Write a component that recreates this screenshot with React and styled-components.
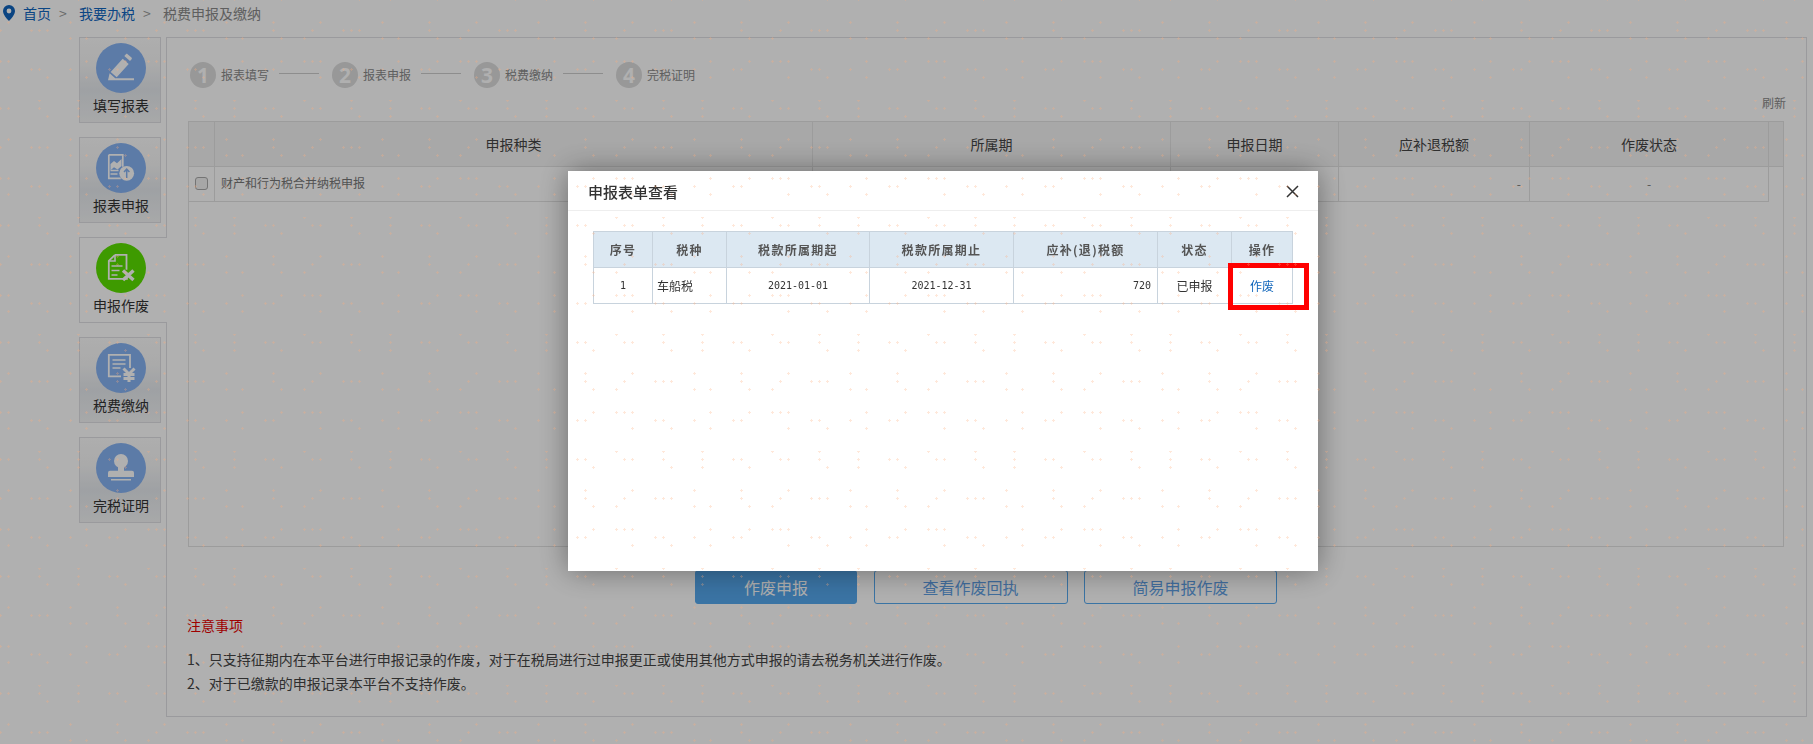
import React from 'react';
import styled, { createGlobalStyle } from 'styled-components';

const Global = createGlobalStyle`
  html, body { margin: 0; padding: 0; background: #fff; }
  body { font-family: "Noto Sans CJK SC", "Noto Sans", sans-serif; }
  * { box-sizing: border-box; }
`;

const Page = styled.div`
  width: 1813px; height: 744px; overflow: hidden; background: #fff;
`;
const Breadcrumb = styled.nav`
  display: flex; align-items: center; height: 26px; margin-bottom: 11px; padding-left: 3px;
  font-size: 14px; line-height: 26px; color: #8a8a8a;
`;
const Pin = styled.svg`
  width: 12px; height: 16px; margin-right: 8px; flex: none;
`;
const Crumb = styled.span`
  color: ${p => (p.$link ? '#1166c0' : '#8a8a8a')};
`;
const Sep = styled.span`
  width: 28px; padding-right: 4px; text-align: center; font-size: 14px; color: #999;
`;
const Layout = styled.div`
  display: flex; padding-left: 79px;
`;
const Side = styled.div`
  width: 87px; flex: none; display: flex; flex-direction: column; align-items: flex-start; gap: 14px;
`;
const Tab = styled.div`
  position: relative; z-index: 1; height: 86px; display: flex; flex-direction: column; align-items: center;
  padding: 5px ${p => (p.$active ? '6px' : '0')} 0 ${p => (p.$active ? '1px' : '2px')};
  width: ${p => (p.$active ? '88px' : '82px')};
  border: 1px solid #dfdfe4;
  border-right: ${p => (p.$active ? '0' : '1px solid #dfdfe4')};
  background: ${p => (p.$active ? '#fff' : 'linear-gradient(#fcfcfc 0%, #f7f7f7 30%, #e6eaee 62%, #f3f4f5 100%)')};
`;
const IconCircle = styled.svg`
  width: 50px; height: 50px; flex: none; display: block;
`;
const TabLabel = styled.div`
  margin-top: 2px; font-size: 14px; line-height: 20px; color: #333; white-space: nowrap;
`;
const Main = styled.main`
  width: 1641px; height: 680px; flex: none; border: 1px solid #dfdfe4;
`;
const Steps = styled.div`
  display: flex; align-items: center; height: 26px; margin-top: 24px; padding-left: 23px;
`;
const StepNum = styled.div`
  width: 26px; height: 26px; border-radius: 50%; background: #dcdcdc; color: #fff; flex: none;
  display: flex; align-items: center; justify-content: center;
  font: 700 21px/26px "Noto Sans", sans-serif;
`;
const StepText = styled.span`
  margin-left: 5px; font-size: 12px; line-height: 26px; color: #8a8a8a; white-space: nowrap;
`;
const StepLine = styled.i`
  width: 40px; height: 1px; margin: -4px 13px 0 10px; background: #ccc; flex: none;
`;
const RefreshRow = styled.div`
  height: 18px; margin-top: 6px; padding-right: 20px; text-align: right;
  font-size: 12px; line-height: 18px; color: #888;
`;
const GridBox = styled.div`
  width: 1596px; height: 426px; margin: 9px 0 0 21px; border: 1px solid #e2e2e2;
`;
const HeadRow = styled.div`
  display: grid; grid-template-columns: 26px 598px 358px 168px 191px 239px 1fr; height: 45px;
  background: #f4f4f4; border-bottom: 1px solid #e2e2e2;
`;
const HeadCell = styled.div`
  display: flex; align-items: center; justify-content: center; font-size: 14px; color: #444;
  padding-bottom: 1px;
  &:not(:last-child) { border-right: 1px solid #e2e2e2; }
`;
const DataRow = styled.div`
  display: grid; grid-template-columns: 26px 598px 358px 168px 191px 239px; height: 35px; width: 1580px;
`;
const DataCell = styled.div`
  display: flex; align-items: center; font-size: 12px; color: #777;
  justify-content: ${p => p.$align || 'flex-start'};
  padding: ${p => (p.$align === 'flex-end' ? '0 8px 2px 0' : p.$align ? '0 0 2px' : '0 0 3px 6px')};
  border-right: 1px solid #e2e2e2; border-bottom: 1px solid #e2e2e2;
`;
const Check = styled.input`
  margin: 0; width: 13px; height: 13px; accent-color: #eee; appearance: none;
  background: #f2f2f2; border: 1px solid #a8a8a8; border-radius: 3px;
`;
const Buttons = styled.div`
  display: flex; gap: 16.5px; margin-top: 23px; padding-left: 528px;
`;
const Btn = styled.button`
  width: ${p => p.$w}px; height: 34px; padding: 0 0 1px; border-radius: 3px; font: inherit; font-size: 16px;
  border: 1px solid #55a8ee;
  background: ${p => (p.$primary ? '#55a8ee' : '#fff')};
  color: ${p => (p.$primary ? '#fff' : '#5f9fe4')};
`;
const NoteTitle = styled.div`
  margin: 11px 0 0 20px; font-size: 14px; line-height: 20px; color: #e60000;
`;
const NoteList = styled.div`
  margin: 12px 0 0 20px; font-size: 14px; line-height: 24px; color: #444;
`;
const Dim = styled.div`
  position: fixed; inset: 0; z-index: 10; background: rgba(0, 0, 0, 0.31);
  padding: 171px 0 0 568px;
`;
const Modal = styled.section`
  position: relative; width: 750px; height: 400px; background: #fff;
  box-shadow: 0 0 28px rgba(0, 0, 0, 0.4);
`;
const ModalHead = styled.header`
  display: flex; align-items: center; justify-content: space-between; height: 40px;
  padding: 1px 19px 0 20px; border-bottom: 1px solid #eee;
  font-size: 15px; font-weight: 500; color: #333;
`;
const Close = styled.svg`
  width: 13px; height: 13px; display: block;
`;
const FormTable = styled.div`
  width: 700px; margin: 20px 0 0 25px; border: 1px solid #c8d3dd;
`;
const cols = '59px 74px 143px 144px 144px 74px 60px';
const FormHead = styled.div`
  display: grid; grid-template-columns: ${cols}; height: 36px; background: #dce8f2;
  border-bottom: 1px solid #c8d3dd;
`;
const FormTh = styled.div`
  display: flex; align-items: center; justify-content: center; font-size: 12px; font-weight: 700;
  letter-spacing: 1.3px; color: #555;
  &:not(:last-child) { border-right: 1px solid #c8d3dd; }
`;
const FormRow = styled.div`
  display: grid; grid-template-columns: ${cols}; height: 35px;
`;
const FormTd = styled.div`
  display: flex; align-items: center; color: ${p => (p.$link ? '#1166bb' : '#333')};
  justify-content: ${p => p.$align || 'center'};
  padding: 0 ${p => (p.$align === 'flex-end' ? '6px' : '0')} 1px ${p => (p.$align === 'flex-start' ? '4px' : '0')};
  font-family: ${p => (p.$mono ? '"DejaVu Sans Mono", "Liberation Mono", monospace' : 'inherit')};
  font-size: ${p => (p.$mono ? '10px' : '12px')};
  &:not(:last-child) { border-right: 1px solid #c8d3dd; }
`;
const Highlight = styled.div`
  position: absolute; left: 660px; top: 92px; width: 81px; height: 47px; border: 5px solid #ff0000;
`;
const Watermark = styled.svg`
  position: fixed; inset: 0; z-index: 20; width: 1813px; height: 744px; pointer-events: none;
`;

const marks = [
  [48,0],[95,0],[134,0],[9,8],[17,8],[56,8],[64,8],[95,8],[134,8],[25,16],[103,16],[134,16],
  [17,39],[64,39],[126,39],[17,47],[56,47],[87,47],[95,47],[103,47],[25,55],[48,55],[126,55],[142,55],
  [25,78],[48,78],[56,78],[64,78],[142,78],[9,86],[17,86],[87,86],[95,86],[126,86],[64,94],[103,94],[142,94],
];

const Disc = ({ color, children }) => (
  <IconCircle viewBox="0 0 50 50">
    <circle cx="25" cy="25" r="25" fill={color} />
    {children}
  </IconCircle>
);
const BLUE = '#86b2f2';
const GREEN = '#5bdf00';

const PencilIcon = () => (
  <Disc color={BLUE}>
    <path fill="#fff" d="M26.700 15.700l6 5.300L20.700 34.300l-6-5.300zM28.300 13l1.600-1.800c.5-.5 1.200-.5 1.700 0l3.900 3.400c.5.5.5 1.200.1 1.700l-1.600 1.800zM13.600 30.300l5.600 5H38v2H12z" />
  </Disc>
);
const ReportIcon = () => (
  <Disc color={BLUE}>
    <path fill="none" stroke="#fff" strokeWidth="1.700" d="M12.800 11.800h14v12M12.800 11.800v23.500h12" />
    <path fill="#fff" d="M14.500 21l3.500-3 3 2.200 4.500-4.200v7l-4 3.400-3.500-2.200-3.500 3z" />
    <path fill="none" stroke="#fff" strokeWidth="1.500" d="M14.500 27.500h8M14.500 31h7" />
    <circle cx="30.700" cy="30.300" r="7.400" fill="#fff" />
    <path fill="none" stroke={BLUE} strokeWidth="1.500" d="M30.700 35v-8.600M28 29l2.700-2.800 2.700 2.800" />
  </Disc>
);
const VoidIcon = () => (
  <Disc color={GREEN}>
    <path fill="none" stroke="#fff" strokeWidth="1.800" d="M19 11.800h11.500v15M19 11.800l-6.200 6v18h19" />
    <path fill="none" stroke="#fff" strokeWidth="1.600" d="M19 12v6h-6M15.500 23h11M15.500 27.500h8M15.500 32h6" />
    <path fill="none" stroke="#fff" strokeWidth="3.400" d="M27 27.500l10.500 9.500M37.500 27.500L27 37" />
  </Disc>
);
const PayIcon = () => (
  <Disc color={BLUE}>
    <path fill="none" stroke="#fff" strokeWidth="1.800" d="M34 25V11.800H12.800v21.500H25" />
    <path fill="none" stroke="#fff" strokeWidth="1.600" d="M16.500 17h13M16.500 21h13M16.500 25h8" />
    <path fill="none" stroke="#fff" strokeWidth="3" d="M27.500 25.500l5.500 5.500 5.500-5.500M33 31v8M27.500 31.500h11M27.500 35.500h11" />
  </Disc>
);
const StampIcon = () => (
  <Disc color={BLUE}>
    <circle cx="25" cy="18" r="7" fill="#fff" />
    <path fill="#fff" d="M22 22h6v6h-6zM14 27.700h22a2 2 0 0 1 2 2V34H12v-4.300a2 2 0 0 1 2-2zM15 36h20v1.600H15z" />
  </Disc>
);

const tabs = [
  { label: '填写报表', Icon: PencilIcon },
  { label: '报表申报', Icon: ReportIcon },
  { label: '申报作废', Icon: VoidIcon, active: true },
  { label: '税费缴纳', Icon: PayIcon },
  { label: '完税证明', Icon: StampIcon },
];
const steps = ['报表填写', '报表申报', '税费缴纳', '完税证明'];

export default function App() {
  return (
    <Page>
      <Global />
      <Breadcrumb>
        <Pin viewBox="0 0 12 16">
          <path fill="#0f63bd" fillRule="evenodd" d="M6 0a6 6 0 0 1 6 6c0 3.600-3.600 7.600-6 10C3.600 13.600 0 9.600 0 6a6 6 0 0 1 6-6zm0 3.600a2.400 2.400 0 1 0 0 4.800 2.400 2.400 0 0 0 0-4.800z" />
        </Pin>
        <Crumb $link>首页</Crumb>
        <Sep>&gt;</Sep>
        <Crumb $link>我要办税</Crumb>
        <Sep>&gt;</Sep>
        <Crumb>税费申报及缴纳</Crumb>
      </Breadcrumb>
      <Layout>
        <Side>
          {tabs.map(({ label, Icon, active }) => (
            <Tab key={label} $active={active}>
              <Icon />
              <TabLabel>{label}</TabLabel>
            </Tab>
          ))}
        </Side>
        <Main>
          <Steps>
            {steps.map((s, i) => (
              <React.Fragment key={s}>
                <StepNum>{i + 1}</StepNum>
                <StepText>{s}</StepText>
                {i < 3 && <StepLine />}
              </React.Fragment>
            ))}
          </Steps>
          <RefreshRow>刷新</RefreshRow>
          <GridBox>
            <HeadRow>
              <HeadCell />
              <HeadCell>申报种类</HeadCell>
              <HeadCell>所属期</HeadCell>
              <HeadCell>申报日期</HeadCell>
              <HeadCell>应补退税额</HeadCell>
              <HeadCell>作废状态</HeadCell>
              <HeadCell />
            </HeadRow>
            <DataRow>
              <DataCell $align="center"><Check type="checkbox" /></DataCell>
              <DataCell>财产和行为税合并纳税申报</DataCell>
              <DataCell />
              <DataCell />
              <DataCell $align="flex-end">-</DataCell>
              <DataCell $align="center">-</DataCell>
            </DataRow>
          </GridBox>
          <Buttons>
            <Btn $primary $w={162}>作废申报</Btn>
            <Btn $w={194}>查看作废回执</Btn>
            <Btn $w={193}>简易申报作废</Btn>
          </Buttons>
          <NoteTitle>注意事项</NoteTitle>
          <NoteList>
            <div>1、只支持征期内在本平台进行申报记录的作废，对于在税局进行过申报更正或使用其他方式申报的请去税务机关进行作废。</div>
            <div>2、对于已缴款的申报记录本平台不支持作废。</div>
          </NoteList>
        </Main>
      </Layout>
      <Dim>
        <Modal>
          <ModalHead>
            申报表单查看
            <Close viewBox="0 0 13 13">
              <path fill="none" stroke="#333" strokeWidth="1.5" d="M1 1l11 11M12 1L1 12" />
            </Close>
          </ModalHead>
          <FormTable>
            <FormHead>
              <FormTh>序号</FormTh>
              <FormTh>税种</FormTh>
              <FormTh>税款所属期起</FormTh>
              <FormTh>税款所属期止</FormTh>
              <FormTh>应补(退)税额</FormTh>
              <FormTh>状态</FormTh>
              <FormTh>操作</FormTh>
            </FormHead>
            <FormRow>
              <FormTd $mono>1</FormTd>
              <FormTd $align="flex-start">车船税</FormTd>
              <FormTd $mono>2021-01-01</FormTd>
              <FormTd $mono>2021-12-31</FormTd>
              <FormTd $mono $align="flex-end">720</FormTd>
              <FormTd>已申报</FormTd>
              <FormTd $link>作废</FormTd>
            </FormRow>
          </FormTable>
          <Highlight />
        </Modal>
      </Dim>
      <Watermark>
        <defs>
          <pattern id="wm" x="568" y="334" width="156" height="117" patternUnits="userSpaceOnUse">
            {marks.map(([x, y]) => (
              <path key={`${x}-${y}`} fill="#ffaa78" fillOpacity="0.28" d={`M${x - 1} ${y}h3v1h-3zM${x} ${y - 1}h1v1h-1zM${x} ${y + 1}h1v1h-1z`} />
            ))}
          </pattern>
        </defs>
        <rect width="1813" height="744" fill="url(#wm)" />
      </Watermark>
    </Page>
  );
}
